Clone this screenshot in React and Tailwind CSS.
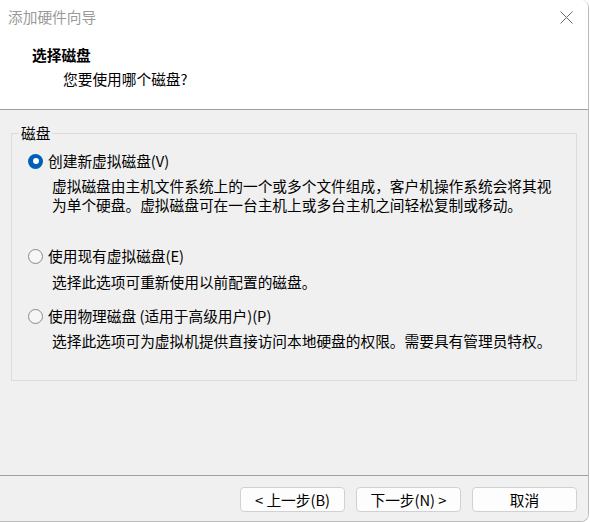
import React from 'react';

const font = { fontFamily: '"Noto Sans CJK SC", "Noto Sans", sans-serif' };

const Radio = ({ checked }) =>
  checked ? (
    <span className="w-[15px] h-[15px] rounded-full bg-[#005fb8] flex items-center justify-center shrink-0">
      <span className="w-[6px] h-[6px] rounded-full bg-white" />
    </span>
  ) : (
    <span className="w-[15px] h-[15px] rounded-full border border-[#8a8a8a] bg-[#f6f6f6] shrink-0" />
  );

const Option = ({ checked, label, className }) => (
  <div className={"flex items-center h-[20px] pl-[16px] " + (className || '')}>
    <Radio checked={checked} />
    <span className="ml-[5px] text-black">{label}</span>
  </div>
);

const Button = ({ children }) => (
  <button className="w-[105px] h-[25px] rounded-[4px] border border-[#d1d1d1] bg-[#fdfdfd] text-black text-[14.7px] leading-[20px] flex items-center justify-center">
    {children}
  </button>
);

export default function App() {
  return (
    <div className="w-[590px] h-[522px] bg-white overflow-hidden" style={font}>
      <div className="w-[589px] h-[522px] flex flex-col border-r border-b border-[#b9b9b9] rounded-tr-[8px] rounded-br-[8px] overflow-hidden text-[14.7px]">
        {/* header */}
        <div className="bg-white h-[110px] border-b border-[#a0a0a0] shrink-0">
          <div className="h-[36px] flex items-center justify-between pl-[8px] pr-[15px]">
            <span className="text-[#9a9a9a] leading-[20px] -mt-[2px]">添加硬件向导</span>
            <svg width="13" height="13" viewBox="0 0 13 13" className="-mt-[1px]">
              <path d="M0.5 0.5 L12.5 12.5 M12.5 0.5 L0.5 12.5" stroke="#6b6b6b" strokeWidth="1" fill="none" />
            </svg>
          </div>
          <div className="pl-[32px] mt-[9px] font-bold text-black leading-[20px]">选择磁盘</div>
          <div className="pl-[63px] mt-[4px] text-black leading-[20px]">您要使用哪个磁盘?</div>
        </div>

        {/* body */}
        <div className="flex-1 bg-[#f0f0f0] flex flex-col">
          <div className="relative ml-[11px] mt-[23px] w-[566px] h-[248px] border border-[#dcdcdc]">
            <span className="absolute left-[7px] -top-[11px] px-[2px] bg-[#f0f0f0] leading-[20px] text-black">磁盘</span>
            <Option checked className="mt-[17px]" label="创建新虚拟磁盘(V)" />
            <div className="pl-[40px] mt-[5px] leading-[19px] text-black">
              <div>虚拟磁盘由主机文件系统上的一个或多个文件组成，客户机操作系统会将其视</div>
              <div>为单个硬盘。虚拟磁盘可在一台主机上或多台主机之间轻松复制或移动。</div>
            </div>
            <Option className="mt-[32px]" label="使用现有虚拟磁盘(E)" />
            <div className="pl-[40px] mt-[6px] leading-[19px] text-black">选择此选项可重新使用以前配置的磁盘。</div>
            <Option className="mt-[15px]" label="使用物理磁盘 (适用于高级用户)(P)" />
            <div className="pl-[40px] mt-[5px] leading-[19px] text-black">选择此选项可为虚拟机提供直接访问本地硬盘的权限。需要具有管理员特权。</div>
          </div>

          <div className="mt-[94px] border-t border-[#a0a0a0]" />

          <div className="flex justify-end gap-[11px] pr-[11px] mt-[11px]">
            <Button>&lt; 上一步(B)</Button>
            <Button>下一步(N) &gt;</Button>
            <Button>取消</Button>
          </div>
        </div>
      </div>
    </div>
  );
}
